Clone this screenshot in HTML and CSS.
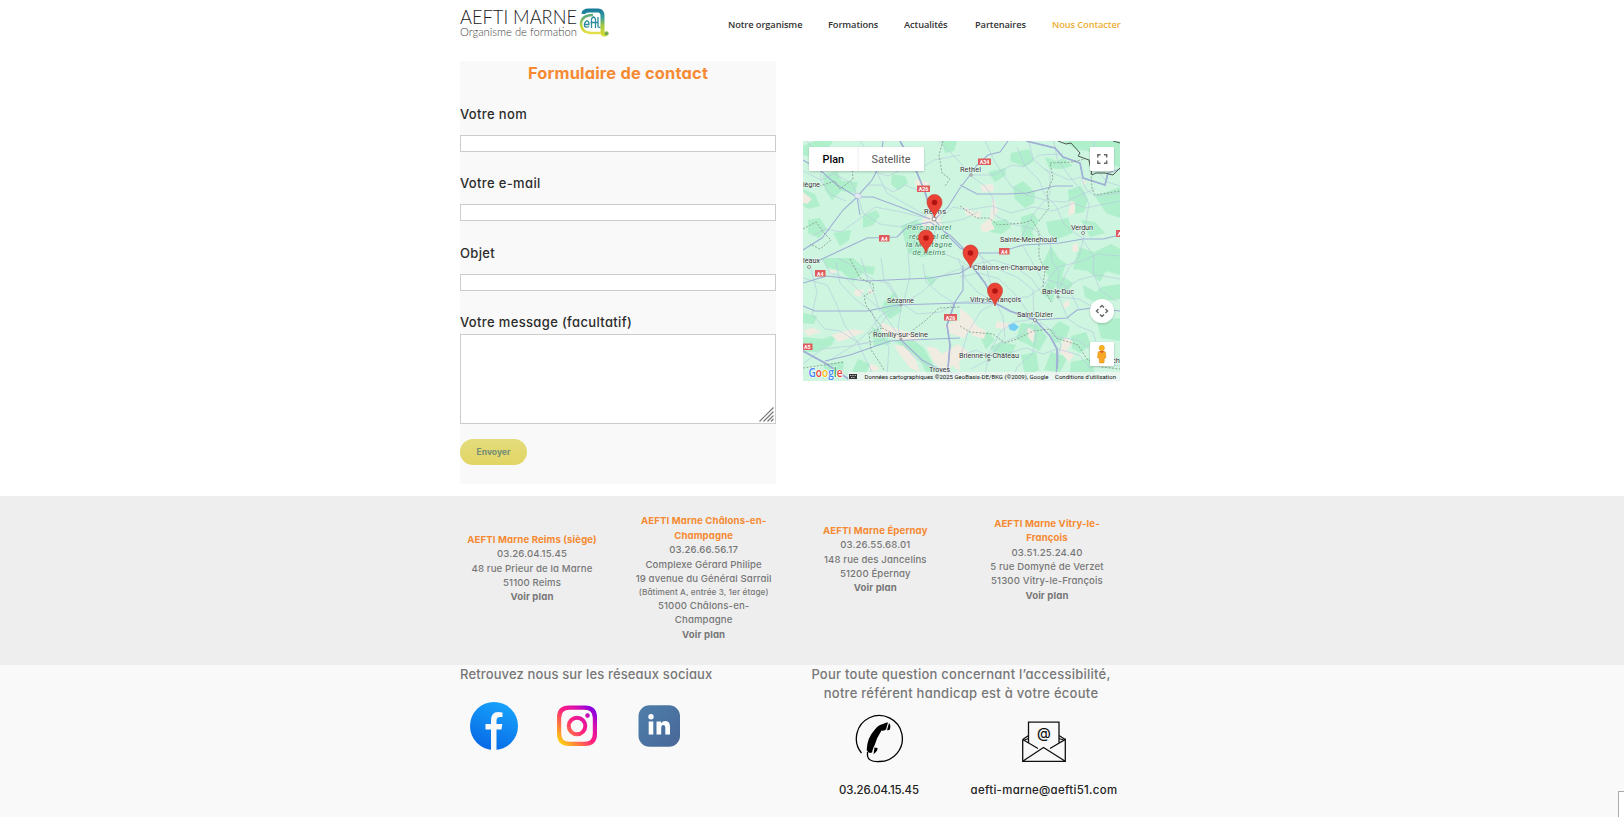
FILE: index.html
```html
<!DOCTYPE html>
<html lang="fr">
<head>
<meta charset="utf-8">
<title>AEFTI Marne - Nous contacter</title>
<link rel="stylesheet" href="styles.css">
</head>
<body>
<header class="header wrap">
  <svg class="logo" width="152" height="34" viewBox="0 0 152 34" role="img" aria-label="AEFTI Marne">
    <defs>
      <linearGradient id="lg" gradientUnits="userSpaceOnUse" x1="134" y1="3" x2="136" y2="30"><stop offset="0" stop-color="#187a9d"/><stop offset=".35" stop-color="#3a9f9c"/><stop offset=".65" stop-color="#a9ca3c"/><stop offset="1" stop-color="#d9dc35"/></linearGradient>
      <linearGradient id="lg2" gradientUnits="userSpaceOnUse" x1="120" y1="12" x2="124" y2="28"><stop offset="0" stop-color="#5fae7c"/><stop offset=".5" stop-color="#c3d535"/><stop offset="1" stop-color="#e2e04a"/></linearGradient>
    </defs>
    <text x="0" y="17.600" class="logo-name" textLength="117" lengthAdjust="spacingAndGlyphs">AEFTI MARNE</text>
    <text x="0" y="29.600" class="logo-sub" textLength="117" lengthAdjust="spacingAndGlyphs">Organisme de formation</text>
    <path d="M123.500 8Q123.500 4.500 129 4.500H138Q142.500 4.500 142.500 10V27Q142.500 29 146 28.500" fill="none" stroke="url(#lg)" stroke-width="4"/>
    <path d="M133 9Q121.500 9 121 18Q121.500 27 132 27H141" fill="none" stroke="url(#lg2)" stroke-width="2.500"/>
    <path d="M124.500 18.500H129Q129 14.500 126.500 15Q124 16.500 124.500 20Q126 22 129 20.500M131.500 22V13Q133.500 9 135.500 13V22M130.500 16.500H138M138 11V20Q138 22 140.500 21" fill="none" stroke="#2a8c9c" stroke-width="1.300"/>
    <circle cx="146.500" cy="27.500" r="2.200" fill="#8dbb4a"/><circle cx="146.500" cy="27.500" r=".8" fill="#277f88"/>
  </svg>
  <nav class="nav">
    <a class="n1">Notre organisme</a><a class="n2">Formations</a><a class="n3">Actualités</a><a class="n4">Partenaires</a><a class="n5 active">Nous Contacter</a>
  </nav>
</header>

<main class="main wrap">
  <form class="form">
    <h1>Formulaire de contact</h1>
    <label>Votre nom</label><input type="text">
    <label>Votre e-mail</label><input type="text">
    <label>Objet</label><input type="text">
    <label class="last">Votre message (facultatif)</label>
    <div class="area"><svg width="15" height="15" viewBox="0 0 15 15"><path d="M.5 14.500L14.500.5M4.500 14.500L14.500 4.500M8.500 14.500L14.500 8.500M12 14.500L14.500 12" stroke="#777" fill="none" stroke-width="1.200"/></svg></div>
    <button type="button">Envoyer</button>
  </form>

  <svg class="map" width="317" height="240" viewBox="0 0 317 240">
    <defs>
      <g id="pin"><path d="M0 0C-1-6-7.500-9-7.500-15.500A7.500 7.500 0 0 1 7.500-15.500C7.500-9 1-6 0 0Z" fill="#ea4335" stroke="#c5372c" stroke-width=".6"/><circle cy="-15" r="2.800" fill="#b31412"/></g>
      <filter id="sh" x="-20%" y="-20%" width="140%" height="150%"><feDropShadow dx="0" dy="1" stdDeviation="1" flood-opacity=".2"/></filter>
    </defs>
    <rect width="317" height="240" fill="#cdf5df"/>
    <g fill="#b0efcc">
      <path d="M0 5L12 0H30L24 9L12 17L0 14ZM20 34L34 30L39 40L55 41L52 52L38 50L29 59L22 49ZM0 48L12 53L17 65L5 68L0 64ZM39 17L52 14L57 22L48 29ZM60 75L73 69L77 75L70 84L60 87ZM89 33L102 35L105 42L95 49L88 43ZM5 79L17 77L24 88L16 97L5 92ZM30 92L48 89L46 99L37 105ZM98 85L113 79L122 86L121 103L131 114L118 116L105 112ZM69 12L83 9L84 19L75 25Z"/>
      <path d="M138 0H154L151 10L142 12ZM208 12L226 8L231 20L222 26L207 20ZM185 31L202 27L203 34L192 41ZM210 46L220 40L232 51L231 62L222 67L212 58ZM242 16L254 20L260 17L270 25L258 28L246 27ZM260 0H317V27L304 20L296 22L285 10L272 8ZM265 49L278 45L285 58L281 71L271 73L266 62ZM189 81L203 78L208 86L199 93L187 91ZM218 76L230 72L236 80L229 91L232 99L219 97ZM243 81L265 77L270 92L254 98L246 93ZM278 79L292 81L302 92L287 96ZM292 55L317 46V77L303 72Z"/>
      <path d="M248 105L256 118L263 122L259 135L270 142L264 153L252 145L250 161L239 153L246 137L239 124ZM276 106L291 111L308 103L317 108V134L303 130L297 141L285 130L270 128ZM280 144L293 151L298 146L317 143V158L304 160L299 165L282 156ZM218 182L235 184L244 196L236 210L226 204L213 198ZM246 190L256 180L267 186L263 198L252 202ZM268 195L283 191L288 204L277 212L269 207ZM198 201L213 204L207 217L194 215L187 206ZM218 214L233 211L236 229L222 235ZM248 211L265 216L257 231L241 229ZM268 221L288 217L293 236H266ZM294 180L317 177V200L298 197ZM177 196L185 190L192 199L183 208Z"/>
      <path d="M18 117H50L58 124L72 126L70 134L61 131L50 141L38 130L25 127ZM92 151L81 161L78 169L87 178L99 170L96 160ZM0 196L20 198L34 193L29 204L14 211H0ZM69 186L82 193L88 203L71 205ZM91 200L110 199L121 207L132 227L143 239H127L117 219L105 209ZM20 224L41 220L40 231L24 235ZM0 172L14 175L11 183L0 182ZM121 134L134 138L128 145ZM55 218L67 223L62 235L49 231Z"/>
    </g>
    <g fill="#f0ece2">
      <path d="M0 51L9 58L4 63L0 62ZM112 38L127 42L121 46L113 45ZM121 75L137 72L139 86L126 89L119 84ZM178 44L190 43L191 50L179 51ZM161 65L170 71L178 70L177 77L163 74ZM190 55L195 70L188 81L192 88L180 92L177 85L187 77ZM267 60L272 61L272 72L265 75ZM278 38L284 41L281 44ZM269 105L274 101L276 110L270 111ZM162 102L173 106L171 111L162 109ZM260 163L265 158L267 164L261 168ZM157 167L166 174L174 185L183 190L181 198L170 195L164 187L157 183ZM224 186L232 190L230 202L225 196ZM194 180L208 183L203 188L192 187ZM261 196L270 201L264 209L271 214L266 221L257 211ZM294 205L306 208L300 221L289 218Z"/>
      <path d="M27 128L35 130L27 134ZM52 148L61 149L57 156L51 154ZM0 189L10 187L19 191L5 195ZM28 194L49 188L62 190L57 193L36 201ZM78 181L91 187L112 193L118 200L96 199L79 191ZM91 204L100 205L111 215L117 231L107 227L97 214ZM123 205L134 207L139 213L155 203L167 212L156 221L157 231L149 224L145 232L131 222ZM68 222L77 227L72 231L66 228ZM141 185L154 179L169 184L161 197L148 193ZM65 147L72 151L66 153Z"/>
    </g>
    <path d="M205 184L211 182L216 186L212 190L207 189Z" fill="#73cdf4"/>
    <g fill="none" stroke="#b6c8df" stroke-width=".6">
      <path d="M0 30L18 39L31 33L49 42L54 55L64 44L78 44L90 51L102 44L114 49M4 0L17 18L18 39L27 53L43 60M55 55L60 72L77 83L97 86L118 78M9 95L22 88L38 91L55 79L72 66L98 71L123 77M72 31L85 35L100 28L113 30L131 19L157 14M57 0L66 12L73 30L84 52L101 62L124 75M137 78L150 66L164 69L189 65L208 72L230 66L249 70L271 62L282 67L317 60M167 34L182 45L190 57L191 74L209 83L231 88L247 102M166 34L191 34L209 24L220 26L236 14L260 13M182 0L192 21L208 45L224 54L245 60L263 61L279 53L292 48M136 0L151 15L166 32M214 6L222 25L236 39L242 54L253 65L261 83L279 97M226 0L230 18L247 33L247 53L229 75L216 101M241 28L266 39L278 36L283 48L292 55L317 52M251 0L254 18L267 36L279 50L286 63L280 98M291 0L292 26L304 41L317 45"/>
      <path d="M135 82L147 81L161 78L175 71M133 86L131 96L137 111L154 118L167 126L153 129L134 137L119 151L98 164L83 176L70 194M125 81L112 99L105 114L107 135L100 163L114 173L138 171L151 163M99 163L95 185L97 199L111 216L132 229M98 163L78 174L66 190L51 204L24 221M0 137L24 144L33 162L42 185L54 200L63 219L69 231M20 119L27 132L43 137L61 154L79 170L98 198M33 121L37 142L52 158L69 171L75 189L86 206L84 234M8 128L14 151L9 173L22 188L37 190L57 203L81 199M35 117L48 124L71 139L86 142L98 162M58 117L65 139L72 155L77 171M78 117L81 139L98 163M120 123L123 141L137 153L151 162L167 160L192 162M155 117L162 137L173 150L192 162L178 170L165 191L157 217M0 223L19 208L47 205L69 201M157 136L176 132L196 138L212 153L231 179"/>
      <path d="M177 113L184 129L189 148L193 162L200 176L202 196L186 215L181 238M169 124L191 119L212 126L229 138L239 153L256 152L275 139L294 134L317 138M174 112L192 127L214 136L230 149L231 178L211 181L198 190L184 216M220 105L228 119L239 139L256 156L276 158L299 172M192 163L206 157L225 156L239 146L255 126L279 120L295 113L317 115M232 179L218 194L199 202L185 219L168 228M232 181L233 198L229 213L214 226L209 240M237 181L251 191L258 204L253 222L254 240M254 196L275 199L288 209L302 222L317 225M264 177L275 185L290 191L294 205L310 204M245 139L261 144L270 156L276 169M247 102L249 120L256 130L254 151L264 176M280 99L291 116L290 131L297 149L313 160M280 99L276 116L265 128L255 151M157 215L173 209L187 216L206 212L223 207L240 213L254 208L276 214L289 230"/>
    </g>
    <g fill="none" stroke="#9fafd5" stroke-width="1.100">
      <path d="M97 0L112 27L122 51L127 69L131 78L144 94L157 107L167 112M0 19L17 29L34 44L54 56L70 56L97 66L112 72L127 78M54 56L69 39L77 24L80 0M0 109L19 97L40 69L54 56L57 74M0 118L17 119L34 111L64 97L94 96L104 86L127 81L148 95L164 111M205 0L197 11L185 14L174 24L167 34L157 47L145 66L132 78M223 0L252 7L260 16L277 22L280 37L302 44L305 32L317 28M157 44L174 53L204 53L224 52L252 45L270 45M167 112L194 112L220 104L257 102L280 98L300 98L317 94M0 165L12 170L34 170L64 170L94 164L157 162L192 162M0 142L24 135L64 140L127 137L157 132L169 125L182 142L192 162L207 170L232 179L264 177L274 169L289 167L317 170M160 124V149L152 161L144 184L147 204L144 239M0 210L22 222L47 239M22 220L47 214L87 200L107 199L157 197M98 199L119 219L139 230L157 233M232 179L247 195L254 208L255 220L252 239"/>
      <path stroke-width="1.600" d="M97 0L112 27L122 51L128 70M223 0L252 7L260 16L277 22L280 37L302 44L305 32M169 125L182 142L192 162L207 170L232 179M232 179L247 195L254 208V228M0 210L22 222L47 239M152 161L144 184L147 204L144 239"/>
    </g>
    <g fill="none" stroke="#77897d" stroke-width=".7" stroke-dasharray="2 1.500">
      <path d="M140 0L136 14L139 32L147 38L142 45M48 12L50 38L37 48L32 40L17 45M0 88L13 81L21 92L28 99L17 108L7 103M157 65L174 77L186 77L195 84L220 82L229 79L236 91L236 116L242 129L240 145L248 161M236 80L246 67L244 51L250 37L247 22L269 21L282 18M287 18L289 48L292 54L317 50M47 118L57 137L70 143L71 149L61 155L63 164L79 187L87 191M110 189L122 180L136 167L157 166M79 187L66 192L68 209L77 222L81 229M0 227L41 221M157 185L167 191L190 193L202 202L214 198L230 190L247 188L253 197L275 204L284 218L298 226L317 228"/>
    </g>
    <path d="M255 0L263 3L268 2L277 12L275 15L286 19L289 34L293 32L302 32L310 34L317 27M310 0L317 2" fill="none" stroke="#4b5752" stroke-width="1"/>
    <g fill="#fff" stroke="#666" stroke-width=".7"><circle cx="131" cy="78" r="2"/><circle cx="168" cy="34" r="1.200"/><circle cx="280" cy="92" r="1.500"/><circle cx="232" cy="179" r="1.500"/><circle cx="6" cy="126" r="1.500"/><circle cx="98" cy="198" r="1"/><circle cx="98" cy="164" r="1"/><circle cx="255" cy="156" r="1"/><circle cx="186" cy="219" r="1"/></g>
    <path d="M51 53L55 52L59 55L57 58L53 57Z" fill="#e3e9f3" stroke="#b9c4dc" stroke-width=".6"/>
    <g class="place">
      <text x="0" y="45.500" textLength="17">iègne</text><text x="121" y="72.500" textLength="22">Reims</text><text x="157" y="31" textLength="21">Rethel</text><text x="268" y="88.500" textLength="22">Verdun</text><text x="197" y="100.500" textLength="57">Sainte-Menehould</text><text x="0" y="122" textLength="17">leaux</text><text x="84" y="161.500" textLength="27">Sézanne</text><text x="70" y="196" textLength="55">Romilly-sur-Seine</text><text x="126" y="231" textLength="21">Troyes</text><text x="170" y="128.500" textLength="76">Châlons-en-Champagne</text><text x="239" y="153" textLength="32">Bar-le-Duc</text><text x="167" y="161" textLength="51">Vitry-le-François</text><text x="214" y="175.500" textLength="36">Saint-Dizier</text><text x="156" y="216.500" textLength="60">Brienne-le-Château</text><text x="309" y="222">ch</text>
    </g>
    <g class="park"><text x="126" y="89" textLength="44">Parc naturel</text><text x="126" y="97.500" textLength="40">régional de</text><text x="126" y="105.500" textLength="46">la Montagne</text><text x="126" y="114" textLength="33">de Reims</text></g>
    <g class="tag">
      <rect x="114" y="44.500" width="13" height="6.500"/><text x="120.500" y="50">A26</text>
      <rect x="76" y="94" width="10.500" height="6.500"/><text x="81.200" y="99.500">A4</text>
      <rect x="175" y="17.500" width="13" height="6.500"/><text x="181.500" y="23">A34</text>
      <rect x="196" y="107" width="10.500" height="6.500"/><text x="201.200" y="112.500">A4</text>
      <rect x="313" y="89" width="9" height="7"/><text x="316.500" y="95">A</text>
      <rect x="12" y="129" width="10.500" height="6.500"/><text x="17.200" y="134.500">A4</text>
      <rect x="141" y="173" width="13" height="6.500"/><text x="147.500" y="178.500">A26</text>
      <rect x="-1" y="202.500" width="10.500" height="6.500"/><text x="4.200" y="208">A5</text>
    </g>
    <use href="#pin" x="131.500" y="76.500"/><use href="#pin" x="123" y="112"/><use href="#pin" x="167.500" y="127"/><use href="#pin" x="192" y="165"/>
    <rect x="45" y="231" width="272" height="9" fill="#f5f5f5" opacity=".75"/>
    <text class="google" x="5.500" y="235.500" textLength="34" lengthAdjust="spacingAndGlyphs"><tspan fill="#4285f4">G</tspan><tspan fill="#ea4335">o</tspan><tspan fill="#fbbc04">o</tspan><tspan fill="#4285f4">g</tspan><tspan fill="#34a853">l</tspan><tspan fill="#ea4335">e</tspan></text>
    <rect x="46" y="233" width="8" height="5" fill="#333"/><path d="M47 234.500H53M48 236.500H52" stroke="#eee" stroke-width=".8" stroke-dasharray="1 .7"/>
    <g class="credit"><text x="61.500" y="237.500" textLength="184" lengthAdjust="spacingAndGlyphs">Données cartographiques ©2025 GeoBasis-DE/BKG (©2009), Google</text><text x="252" y="237.500" textLength="61" lengthAdjust="spacingAndGlyphs">Conditions d'utilisation</text></g>
    <g fill="#fff" filter="url(#sh)"><rect x="6" y="6" width="115" height="24" rx="1"/><rect x="287" y="6" width="24" height="24" rx="1"/><circle cx="299" cy="170" r="12"/><rect x="287" y="201" width="24" height="24" rx="1"/></g>
    <path d="M55 6V30" stroke="#eee"/>
    <text class="plan" x="19.500" y="21.500" textLength="21.500" lengthAdjust="spacingAndGlyphs">Plan</text><text class="sat" x="68.500" y="21.500" textLength="39" lengthAdjust="spacingAndGlyphs">Satellite</text>
    <path d="M294.800 16.500V13.800H297.500M301 13.800H303.700V16.500M303.700 19.500V22.200H301M297.500 22.200H294.800V19.500" fill="none" stroke="#666" stroke-width="1.400"/>
    <path d="M297 166.500L299 164.500L301 166.500M297 173.500L299 175.500L301 173.500M295.500 168L293.500 170L295.500 172M302.500 168L304.500 170L302.500 172" fill="none" stroke="#666" stroke-width="1.400"/>
    <circle cx="298.800" cy="207" r="2.700" fill="#f9b21d" stroke="#d98b13" stroke-width=".4"/><path d="M295 211Q299 208.500 302.500 211L303 217H301.500L301 222H296.500L296 217H294.500Z" fill="#f9a825" stroke="#d98b13" stroke-width=".4"/><path d="M296.500 210L299 212.500L301 210" fill="#d35a2d"/>
  </svg>
</main>

<section class="offices">
  <div class="wrap cols">
    <div class="office c1"><b>AEFTI Marne Reims (siège)</b><p>03.26.04.15.45</p><p>48 rue Prieur de la Marne</p><p>51100 Reims</p><strong>Voir plan</strong></div>
    <div class="office c2"><b>AEFTI Marne Châlons-en-<br>Champagne</b><p>03.26.66.56.17</p><p>Complexe Gérard Philipe</p><p>19 avenue du Général Sarrail</p><p class="small">(Bâtiment A, entrée 3, 1er étage)</p><p>51000 Châlons-en-<br>Champagne</p><strong>Voir plan</strong></div>
    <div class="office c3"><b>AEFTI Marne Épernay</b><p>03.26.55.68.01</p><p>148 rue des Jancelins</p><p>51200 Épernay</p><strong>Voir plan</strong></div>
    <div class="office c4"><b>AEFTI Marne Vitry-le-<br>François</b><p>03.51.25.24.40</p><p>5 rue Domyné de Verzet</p><p>51300 Vitry-le-François</p><strong>Voir plan</strong></div>
  </div>
</section>

<footer class="footer">
  <div class="wrap foot">
    <div class="social">
      <p class="lead">Retrouvez nous sur les réseaux sociaux</p>
      <svg class="icons" width="222" height="50" viewBox="0 0 222 50">
        <defs>
          <linearGradient id="fb" x1=".7" y1="0" x2=".3" y2="1"><stop offset="0" stop-color="#18a3fc"/><stop offset="1" stop-color="#0668e5"/></linearGradient>
          <linearGradient id="ig" x1="0" y1="1" x2="1" y2="0"><stop offset=".05" stop-color="#ffdd10"/><stop offset=".25" stop-color="#ff8a35"/><stop offset=".5" stop-color="#ff1f80"/><stop offset=".72" stop-color="#d60fb0"/><stop offset=".9" stop-color="#8a00e0"/></linearGradient>
          <linearGradient id="li" x1="0" y1="0" x2="1" y2="1"><stop offset="0" stop-color="#4e7fab"/><stop offset="1" stop-color="#486798"/></linearGradient>
        </defs>
        <circle cx="34" cy="25" r="24" fill="url(#fb)"/>
        <path d="M31 49.500V28.500H25.500V23H31V19.500Q31 11 38 11Q41 11 42.500 11.500V16H40Q36.500 16 36.500 19.500V23H42.300L41.500 28.500H36.500V49.500Z" fill="#f8f8f8"/>
        <path fill-rule="evenodd" fill="url(#ig)" d="M109 4.500H125Q137 4.500 137 16.500V33Q137 45 125 45H109Q97 45 97 33V16.500Q97 4.500 109 4.500ZM109.500 8.700Q101.200 8.700 101.200 17V32.500Q101.200 40.800 109.500 40.800H124.500Q132.800 40.800 132.800 32.500V17Q132.800 8.700 124.500 8.700ZM117 14.700A10.300 10.300 0 1 1 117 35.300A10.300 10.300 0 1 1 117 14.700ZM117 18.700A6.300 6.300 0 1 0 117 31.300A6.300 6.300 0 1 0 117 18.700ZM127.500 12.300A2.300 2.300 0 1 1 127.500 16.900A2.300 2.300 0 1 1 127.500 12.300Z"/>
        <rect x="178.500" y="4.300" width="41.500" height="41.500" rx="11" fill="url(#li)"/>
        <circle cx="191" cy="15.800" r="2.700" fill="#fff"/><path d="M188.700 20.500H193.300V33.500H188.700ZM196.500 20.500H201V22.300Q202.500 20 205.500 20Q210 20 210 26V33.500H205.300V27Q205.300 24 203.300 24Q201.200 24 201.200 27V33.500H196.500Z" fill="#fff"/>
      </svg>
    </div>
    <div class="access">
      <p class="lead l1">Pour toute question concernant l’accessibilité,</p>
      <p class="lead l2">notre référent handicap est à votre écoute</p>
      <div class="contacts">
        <div class="contact tel">
          <svg width="50" height="50" viewBox="0 0 50 50"><path d="M7.500 39A23 23 0 1 1 25 47.500Q14.500 48 13.500 42V38" fill="none" stroke="#000" stroke-width="1.300"/><path d="M29 10Q32 8 34 8.500L32 15.500Q30.500 17 27.500 16.500Q22.500 24 20.500 31.500L19.500 33.500Q18.500 36 18 38.500Q14 40 12.700 36Q13 24 20.500 16Q24 11 29 10ZM35 9Q37.500 12 35.500 16L33 16.200ZM20.500 33.500L23.500 34Q24 37 19.500 40.200Z" fill="#000"/></svg>
          <span>03.26.04.15.45</span>
        </div>
        <div class="contact mail">
          <svg width="50" height="50" viewBox="0 0 50 50"><g fill="none" stroke="#111" stroke-width="1.300"><path d="M3.700 25.500V47.300H46.300V25.500L31 34.500M3.700 25.500L19 34.500M3.700 47.300L24.500 33.500L46.300 47.300M9.500 28.500V8.200H40V28.500M9.500 21.500L3.700 25.500M5.500 26L9.500 24.500M40 21.500L46.300 25.500M44.500 26L40 24.500"/></g><text class="at" x="25" y="24">@</text></svg>
          <span>aefti-marne@aefti51.com</span>
        </div>
      </div>
    </div>
  </div>
</footer>
<div class="badge"></div>
</body>
</html>
```
FILE: styles.css
```css
* { box-sizing: border-box; }
body { margin: 0; background: #fff; font-family: Inter, "Liberation Sans", sans-serif; font-feature-settings: "cv11"; color: #777; height: 817px; overflow: hidden; }
p, h1 { margin: 0; }
.wrap { width: 660px; margin-left: 460px; }
.header { height: 61px; display: flex; justify-content: space-between; align-items: flex-start; padding-top: 6px; }
.logo-name { font: 300 18.6px Lato, sans-serif; fill: #222; }
.logo-sub { font: 300 12px Lato, sans-serif; fill: #444; }
.nav { display: flex; gap: 27px; padding-top: 11px; font: 600 9.3px/16px "Open Sans", sans-serif; letter-spacing: -.1px; color: #333; white-space: nowrap; }
.nav .active { color: #eeae32; }
.n1 { width: 73px; } .n2 { width: 49px; } .n3 { width: 44px; } .n4 { width: 50px; } .n5 { width: 68px; }

.main { height: 435px; display: flex; justify-content: space-between; }
.form { width: 316px; height: 423px; background: #f9f9f9; display: flex; flex-direction: column; }
.form h1 { font-size: 16.4px; line-height: 25px; font-weight: 750; color: #f58a32; text-align: center; margin-bottom: 18px; letter-spacing: .2px; }
.form label { font-size: 13px; line-height: 20px; font-weight: 450; color: #2b2b2b; margin-bottom: 11px; letter-spacing: .35px; }
.form input { height: 17px; margin: 0 0 21.3px; padding: 0; border: 1px solid #ccc; background: #fff; }
.form label.last { margin-bottom: 2px; }
.area { height: 90px; border: 1px solid #ccc; background: #fff; display: flex; align-items: flex-end; justify-content: flex-end; padding: 1px; flex: none; }
.form button { width: 67px; height: 26px; margin-top: 15px; border: 0; border-radius: 13px; padding: 0; background: linear-gradient(#e3dc7b, #e2d565); color: #758c75; font: 700 8.5px Inter, sans-serif; font-feature-settings: "cv11"; }
.map { margin-top: 80px; display: block; flex: none; font-family: Roboto, sans-serif; }
.place text { font-size: 7.4px; fill: #333; stroke: #fff; stroke-width: 1px; paint-order: stroke; stroke-opacity: .7; }
.park text { font-size: 7.8px; font-style: italic; fill: #35845b; text-anchor: middle; stroke: #e3fbed; stroke-width: 1px; paint-order: stroke; }
.tag rect { fill: #e05b5d; }
.tag text { fill: #fff; font-size: 5.3px; font-weight: 700; text-anchor: middle; }
.google { font: 600 12.5px "Open Sans", sans-serif; stroke: #fff; stroke-width: 1.2px; paint-order: stroke; }
.credit text { font-size: 6px; fill: #111; }
.plan { font-size: 11px; font-weight: 500; fill: #000; }
.sat { font-size: 11px; fill: #565656; }

.offices { height: 169px; background: #eee; }
.cols { display: grid; grid-template-columns: repeat(4, 144px); column-gap: 27.67px; }
.office { text-align: center; font-size: 9.6px; line-height: 14.4px; font-weight: 450; letter-spacing: .13px; white-space: nowrap; }
.office b { display: block; color: #f58a32; font-weight: 700; }
.office strong { display: block; font-weight: 700; }
.office .small { font-size: 8.2px; line-height: 12.5px; letter-spacing: .1px; }
.c1 { padding-top: 36.8px; } .c2 { padding-top: 18.3px; } .c3 { padding-top: 27.8px; } .c4 { padding-top: 20.8px; }

.footer { height: 152px; background: #f9f9f9; }
.foot { display: flex; justify-content: space-between; }
.lead { font-size: 13px; line-height: 19px; font-weight: 450; letter-spacing: .14px; white-space: nowrap; }
.l1 { letter-spacing: .24px; } .l2 { letter-spacing: .28px; }
.icons { display: block; margin-top: 17px; }
.access { width: 318px; text-align: center; }
.contacts { display: flex; justify-content: space-between; }
.contact { display: flex; flex-direction: column; align-items: center; gap: 18px; font-size: 11.4px; line-height: 17px; font-weight: 450; color: #222; white-space: nowrap; }
.tel { width: 154px; padding-top: 11px; letter-spacing: -.08px; }
.mail { width: 150px; margin-right: 1px; padding-top: 11px; letter-spacing: .33px; }
.at { font: 500 14px Inter, sans-serif; letter-spacing: 0; text-anchor: middle; fill: #111; }
.badge { position: absolute; right: 0; bottom: 0; width: 6px; height: 26px; background: #fff; border: 1px solid #aaa; border-right: 0; border-bottom: 0; }
```
